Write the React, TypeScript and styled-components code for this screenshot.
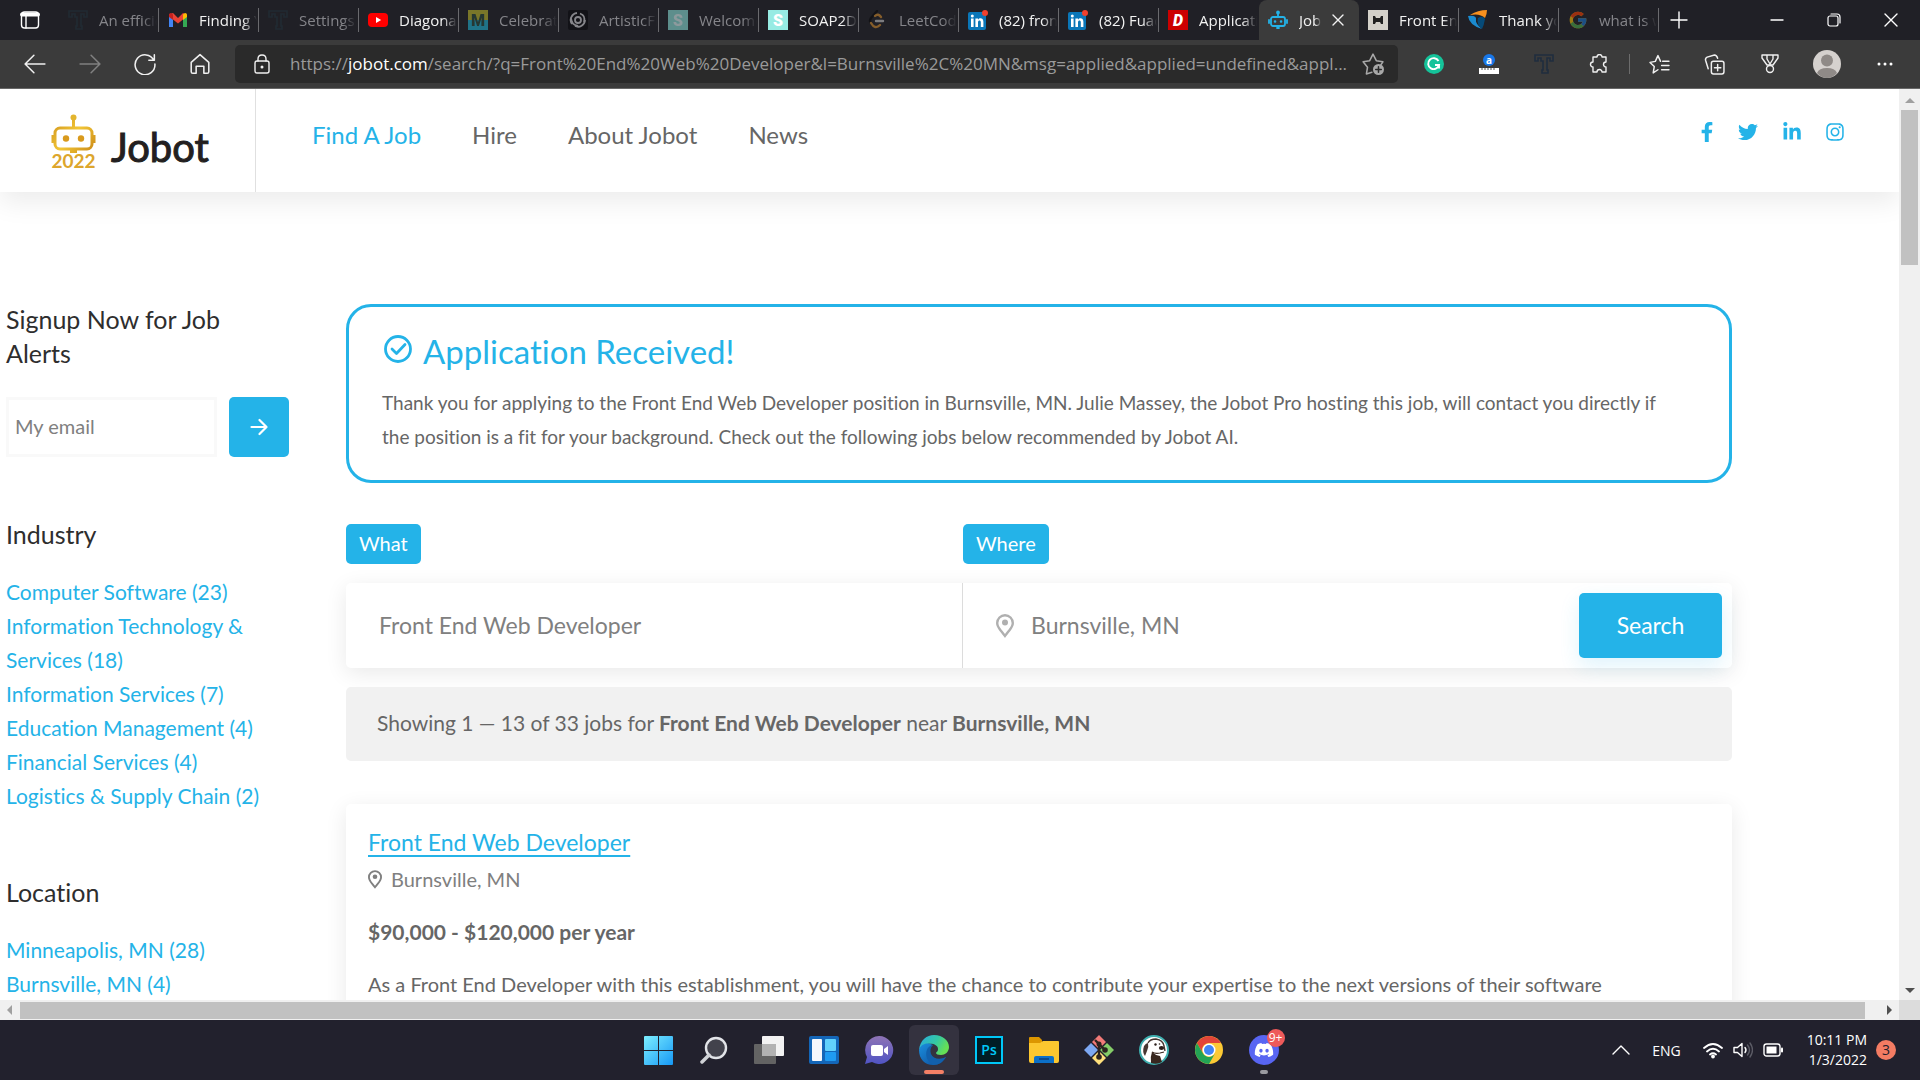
import React from 'react';
import styled, { createGlobalStyle, css } from 'styled-components';
import { FaFacebookF, FaTwitter, FaLinkedinIn, FaInstagram, FaDiscord } from 'react-icons/fa';
import { FcGoogle } from 'react-icons/fc';

const blue = '#24b3e8';
const brand = '"Lato", sans-serif';
const system = '"Open Sans", "Noto Sans", sans-serif';

const GlobalStyle = createGlobalStyle`
  *, *::before, *::after { box-sizing: border-box; }
  body { margin: 0; background: #fff; overflow: hidden; font-family: ${brand}; font-variant-ligatures: none; }
  button, input { font: inherit; }
  button { border: 0; padding: 0; background: none; color: inherit; }
  h1, h2, p, ul { margin: 0; padding: 0; }
  ul { list-style: none; }
  a { color: inherit; text-decoration: none; }
  svg { display: block; flex: none; }
`;

const Desktop = styled.div`
  height: 100vh;
  display: flex;
  flex-direction: column;
`;

/* ---------- browser chrome ---------- */

const TabStrip = styled.div`
  height: 40px;
  flex: none;
  display: flex;
  background: #202026;
  color: #fff;
  font-family: ${system};
`;

const StripButton = styled.button<{ $w: number }>`
  width: ${p => p.$w}px;
  height: 40px;
  display: grid;
  place-items: center;
  flex: none;
`;

const Tab = styled.button<{ $active?: boolean; $asleep?: boolean; $divider: boolean }>`
  flex: 0 1 100px;
  min-width: 0;
  height: 40px;
  padding: 0 ${p => (p.$active ? 15 : 2)}px 0 9px;
  display: flex;
  align-items: center;
  gap: 11px;
  font-size: 15px;
  text-align: left;
  color: ${p => (p.$asleep ? '#85858a' : '#f2f2f2')};
  ${p =>
    p.$divider &&
    css`
      background: linear-gradient(#6a6a6e, #6a6a6e) right center / 1px 24px no-repeat;
    `}
  ${p =>
    p.$active &&
    css`
      background: #3b3b3b;
      border-radius: 8px 8px 0 0;
    `}
  & > svg {
    opacity: ${p => (p.$asleep ? 0.55 : 1)};
  }
`;

const TabTitle = styled.span`
  flex: 1;
  overflow: hidden;
  white-space: nowrap;
  mask-image: linear-gradient(90deg, #000 75%, transparent);
`;

const WindowControls = styled.div`
  margin-left: auto;
  display: flex;
`;

const Toolbar = styled.div`
  height: 49px;
  flex: none;
  display: flex;
  align-items: center;
  padding: 0 8px 0 7px;
  background: #3b3b3b;
  border-bottom: 1px solid #686868;
  color: #f0f0f0;
  font-family: ${system};
`;

const ToolButton = styled.button<{ $dim?: boolean; $wide?: boolean }>`
  width: ${p => (p.$wide ? 60 : 55)}px;
  height: 40px;
  display: grid;
  place-items: center;
  flex: none;
  color: ${p => (p.$dim ? '#808080' : '#f0f0f0')};
`;

const AddressBar = styled.div`
  flex: 1;
  min-width: 0;
  height: 38px;
  margin: 0 8px;
  padding: 0 14px 0 17px;
  display: flex;
  align-items: center;
  border-radius: 5px;
  background: #2a2a2a;
`;

const Url = styled.span`
  flex: 1;
  min-width: 0;
  margin: 0 12px 0 18px;
  padding-bottom: 2px;
  overflow: hidden;
  white-space: nowrap;
  font-size: 17px;
  color: #9a9a9a;
  b { font-weight: 400; color: #fff; }
`;

const ToolDivider = styled.span`
  width: 1px;
  height: 20px;
  margin: 0 2px 0 3px;
  background: #6c6c6c;
`;

/* ---------- viewport and scroll bars ---------- */

const Viewport = styled.div`
  flex: 1;
  min-height: 0;
  display: grid;
  grid-template: minmax(0, 1fr) 20px / minmax(0, 1fr) 21px;
`;

const VBar = styled.div`
  display: flex;
  flex-direction: column;
  align-items: center;
  justify-content: space-between;
  background: #f0f0f0;
`;

const VThumb = styled.div`
  width: 17px;
  height: 17%;
  margin-bottom: auto;
  background: #c1c1c1;
`;

const HBar = styled.div`
  display: flex;
  align-items: center;
  background: #f0f0f0;
`;

const HThumb = styled.div`
  flex: 1;
  height: 17px;
  margin-right: 14px;
  background: #c1c1c1;
`;

const Corner = styled.div`
  background: #dcdcdc;
`;

const Arrow = styled.button`
  width: 20px;
  height: 21px;
  display: grid;
  place-items: center;
`;

const Page = styled.div`
  min-height: 0;
  overflow: hidden;
  background: #fff;
`;

/* ---------- site header ---------- */

const Header = styled.header`
  height: 103px;
  display: flex;
  background: #fff;
  box-shadow: 0 10px 25px rgba(0, 0, 0, 0.08);
`;

const Logo = styled.a`
  width: 256px;
  padding: 25px 0 0 51px;
  display: flex;
  gap: 15px;
  border-right: 1px solid #e0e0e0;
`;

const LogoMark = styled.span`
  display: flex;
  flex-direction: column;
  align-items: center;
  font-size: 19px;
  font-weight: 700;
  line-height: 14px;
  color: #dda62c;
`;

const LogoName = styled.span`
  font-size: 40px;
  line-height: 66px;
  color: #231f20;
  -webkit-text-stroke: 1px #231f20;
`;

const Nav = styled.nav`
  display: flex;
  align-items: center;
  gap: 51px;
  padding: 0 0 11px 56px;
`;

const NavLink = styled.a<{ $current?: boolean }>`
  font-size: 24px;
  line-height: 34px;
  color: ${p => (p.$current ? blue : '#666')};
`;

const Social = styled.div`
  margin-left: auto;
  padding: 33px 55px 0 0;
  display: flex;
  gap: 25px;
  color: ${blue};
`;

const SocialLink = styled.a<{ $w: number }>`
  width: ${p => p.$w}px;
  height: 20px;
  display: grid;
  justify-content: center;
`;

/* ---------- content ---------- */

const Content = styled.div`
  display: grid;
  grid-template-columns: 283px minmax(0, 1fr);
  gap: 57px;
  padding: 110px 167px 0 6px;
`;

const Sidebar = styled.aside`
  display: flex;
  flex-direction: column;
`;

const SideTitle = styled.h2`
  max-width: 240px;
  font-size: 25px;
  font-weight: 400;
  line-height: 34px;
  color: #2e2e2e;
`;

const Signup = styled.form`
  display: flex;
  gap: 12px;
  margin: 27px 0 60px;
`;

const EmailInput = styled.input`
  flex: 1;
  min-width: 0;
  height: 60px;
  padding: 0 6px 2px;
  border: 3px solid #f9f9f9;
  outline: 0;
  font-size: 20px;
  background: #fff;
  &::placeholder { color: #808080; opacity: 1; }
`;

const GoButton = styled.button`
  width: 60px;
  display: grid;
  place-items: center;
  border-radius: 5px;
  background: ${blue};
  color: #fff;
`;

const LinkList = styled.ul`
  max-width: 270px;
  margin: 24px 0 62px;
  font-size: 21px;
  line-height: 34px;
  color: ${blue};
`;

const Main = styled.main`
  display: flex;
  flex-direction: column;
  padding-top: 2px;
`;

const Notice = styled.section`
  padding: 24px 60px 26px 33px;
  border: 3px solid ${blue};
  border-radius: 25px;
`;

const NoticeTitle = styled.h1`
  display: flex;
  align-items: center;
  gap: 10px;
  padding-left: 1px;
  font-size: 33px;
  font-weight: 400;
  line-height: 40px;
  color: ${blue};
  svg { margin-bottom: 4px; }
`;

const NoticeText = styled.p`
  margin-top: 15px;
  font-size: 19px;
  line-height: 34px;
  color: #666;
`;

const SearchForm = styled.form`
  display: grid;
  grid-template-columns: 617px minmax(0, 1fr);
  row-gap: 19px;
  margin-top: 41px;
`;

const FieldLabel = styled.label`
  justify-self: start;
  padding: 0 13px 2px;
  border-radius: 5px;
  font-size: 20px;
  line-height: 38px;
  color: #fff;
  background: ${blue};
`;

const SearchPanel = styled.div`
  grid-column: 1 / -1;
  height: 85px;
  display: grid;
  grid-template-columns: subgrid;
  border-radius: 5px;
  box-shadow: 0 5px 22px rgba(0, 0, 0, 0.09);
`;

const Field = styled.div<{ $divided?: boolean }>`
  display: flex;
  align-items: center;
  gap: 17px;
  padding: 0 10px 0 33px;
  border-right: ${p => (p.$divided ? '1px solid #dcdcdc' : '0')};
  color: #b0b0b0;
`;

const FieldInput = styled.input`
  flex: 1;
  min-width: 0;
  padding: 0 0 2px;
  border: 0;
  outline: 0;
  background: none;
  font-size: 23px;
  color: #808080;
`;

const SearchButton = styled.button`
  width: 143px;
  height: 65px;
  padding-bottom: 2px;
  border-radius: 5px;
  background: ${blue};
  box-shadow: 0 8px 20px rgba(36, 179, 232, 0.14);
  font-size: 23px;
  color: #fff;
`;

const Summary = styled.p`
  margin-top: 19px;
  padding: 19px 31px 21px;
  border-radius: 5px;
  background: #f1f1f1;
  font-size: 21px;
  line-height: 34px;
  color: #666;
`;

const JobCard = styled.article`
  margin-top: 43px;
  padding: 21px 22px;
  border-radius: 5px;
  box-shadow: 0 5px 22px rgba(0, 0, 0, 0.09);
  font-size: 20px;
  line-height: 34px;
  color: #666;
`;

const JobTitle = styled.h2`
  font-size: 23px;
  font-weight: 400;
  line-height: 34px;
  color: ${blue};
  a {
    text-decoration: underline;
    text-decoration-thickness: 2px;
    text-underline-offset: 4px;
  }
`;

const JobPlace = styled.p`
  display: flex;
  align-items: center;
  gap: 9px;
  margin: 3px 0 19px;
  color: #808080;
`;

const Salary = styled.p`
  margin-bottom: 18px;
  font-size: 21px;
  font-weight: 700;
`;

/* ---------- taskbar ---------- */

const Taskbar = styled.footer`
  height: 60px;
  flex: none;
  display: grid;
  grid-template-columns: 1fr auto 1fr;
  align-items: center;
  background: #22212d;
  color: #fff;
  font-family: ${system};
`;

const Apps = styled.div`
  grid-column: 2;
  display: flex;
  gap: 5px;
  padding-left: 2px;
`;

const AppButton = styled.button<{ $active?: boolean }>`
  position: relative;
  width: 50px;
  height: 50px;
  display: grid;
  place-items: center;
  border-radius: 6px;
  background: ${p => (p.$active ? '#34323f' : 'transparent')};
`;

const RunMark = styled.span<{ $wide?: boolean }>`
  position: absolute;
  bottom: 1px;
  width: ${p => (p.$wide ? 20 : 8)}px;
  height: 4px;
  border-radius: 2px;
  background: ${p => (p.$wide ? '#f48066' : '#9a9aa0')};
`;

const AppBadge = styled.span`
  position: absolute;
  top: 4px;
  right: 4px;
  width: 18px;
  height: 18px;
  border-radius: 50%;
  background: #ee5a5a;
  font-size: 12px;
  line-height: 18px;
`;

const Tray = styled.div`
  justify-self: end;
  display: flex;
  align-items: center;
  padding-right: 24px;
  font-size: 14px;
`;

const TrayItem = styled.button`
  display: flex;
  align-items: center;
  gap: 10px;
  margin-right: 22px;
`;

const Clock = styled.time`
  margin: 0 9px 0 2px;
  text-align: right;
  line-height: 20px;
`;

const Alerts = styled.span`
  width: 20px;
  height: 20px;
  border-radius: 50%;
  background: #f47c63;
  color: #22212d;
  text-align: center;
  line-height: 20px;
`;

/* ---------- drawings ---------- */

type DrawProps = { size?: number; box?: number; children: React.ReactNode; sw?: number };

const Line = ({ size = 20, box = 20, sw = 1.4, children }: DrawProps) => (
  <svg width={size} height={size} viewBox={`0 0 ${box} ${box}`} fill="none" stroke="currentColor" strokeWidth={sw} strokeLinecap="round" strokeLinejoin="round" aria-hidden="true">
    {children}
  </svg>
);

const Fill = ({ size = 20, box = 20, children }: DrawProps) => (
  <svg width={size} height={size} viewBox={`0 0 ${box} ${box}`} aria-hidden="true">{children}</svg>
);

const Pin = ({ size }: { size: number }) => (
  <svg width={Math.round(size * 0.75)} height={size} viewBox="0 0 18 24" fill="currentColor" aria-hidden="true">
    <path fillRule="evenodd" d="M9 0a9 9 0 0 0-9 9c0 5 6 10.500 9 15 3-4.500 9-10 9-15a9 9 0 0 0-9-9Zm0 2.400A6.600 6.600 0 0 1 15.600 9c0 3.500-3.600 7-6.600 11C6 16 2.400 12.500 2.400 9A6.600 6.600 0 0 1 9 2.400Z" />
    <circle cx="9" cy="8.500" r="3" />
  </svg>
);

const Typer = ({ size = 20, color = '#22333d' }) => (
  <Fill size={size}>
    <path d="M1 1h18v6h-3V4h-3v12h1v3H8v-3h1V7H7V4H4v3H1Z" fill="none" stroke={color} strokeWidth="1.600" />
  </Fill>
);

const Gmail = () => (
  <Fill>
    <path d="M1 4.500v12.500h4V9.500l5 4 5-4V17h4V4.500L15 3l-5 5-5-5Z" fill="#ea4335" />
    <path d="M1 6v11h4V8Z" fill="#4285f4" />
    <path d="M15 8v9h4V6Z" fill="#34a853" />
    <path d="M15 4.500 17 3q2 0 2 2v2l-4 3Z" fill="#fbbc04" />
    <path d="M1 7V5q0-2 2-2l2 1.500V10Z" fill="#c5221f" />
  </Fill>
);

const Letter = ({ bg, fg, ch, bottom, slant }: { bg: string; fg: string; ch: string; bottom?: string; slant?: boolean }) => (
  <Fill>
    <rect width="20" height="20" fill={bg} />
    {bottom && <rect y="10" width="20" height="10" fill={bottom} />}
    <text x="10" y="16" textAnchor="middle" fontFamily="Roboto" fontStyle={slant ? 'italic' : 'normal'} fontWeight="900" fontSize="16" fill={fg}>{ch}</text>
  </Fill>
);

const YouTube = () => (
  <Fill>
    <rect y="3" width="20" height="14" rx="4" fill="#f00" />
    <path d="m8 7 5.200 3L8 13Z" fill="#fff" />
  </Fill>
);

const Swirl = () => (
  <Fill>
    <rect width="20" height="20" rx="2" fill="#08080c" />
    <g fill="none" stroke="#d8d8dc" strokeWidth="1.800">
      <circle cx="10" cy="10" r="3" />
      <path d="M4 14A7 7 0 0 1 9 3M7 16a7 7 0 0 0 10-6M12 3.500q6 2 4 9M3 7q0 8 7 9" />
    </g>
  </Fill>
);

const Leet = () => (
  <Line sw={2.4}>
    <path d="M9 1 3 8q-2 3 0 5" stroke="#08080a" />
    <path d="M3 13q4 7 9 2M7 6q3-3 6 1" stroke="#d9902f" />
    <path d="M8 11h7" stroke="#c8c8c8" />
  </Line>
);

const LinkedIn = () => (
  <Fill>
    <rect y="2" width="18" height="18" rx="2" fill="#0a76b8" />
    <path d="M3 8.500h2.600V17H3ZM7.400 8.500H10v1.200c1.600-2.400 5.400-1.800 5.400 2V17h-2.600v-4.700c0-2.400-2.800-2.100-2.800 0V17H7.400Z" fill="#fff" />
    <circle cx="4.300" cy="6" r="1.500" fill="#fff" />
    <circle cx="17" cy="3" r="3" fill="#f0402c" />
  </Fill>
);

const RobotTab = () => (
  <Line sw={1.8}>
    <g stroke={blue}>
      <rect x="3" y="7" width="14" height="9" rx="2" />
      <path d="M10 7V3.500M1 10v3M19 10v3M9 18h2" />
      <circle cx="10" cy="2.500" r="1" />
      <path d="M7 11.500h.1M13 11.500h.1" strokeWidth="2.500" />
    </g>
  </Line>
);

const Film = () => (
  <Fill>
    <rect width="20" height="20" fill="#d4d1ca" />
    <path d="M5 6h2l1 2h4l1-2h2v8h-2l-1-2H8l-1 2H5Z" fill="#222" />
  </Fill>
);

const Swoosh = () => (
  <Fill>
    <path d="M2 5Q10 0 19 0q0 4-2 8Q12 3 2 5Z" fill="#f7901e" />
    <path d="M0 6q9-1 8 4-1 3 6 9Q1 15 0 6Z" fill="#1b8bd0" />
    <path d="M10 8q5-3 7 1-1 6-3 10-6-5-4-11Z" fill="#064a78" />
  </Fill>
);

const dim = '#5c5c66';
const tabs: { title: string; icon: React.ReactNode; asleep?: boolean; active?: boolean }[] = [
  { title: 'An efficient', icon: <Typer />, asleep: true },
  { title: 'Finding Y', icon: <Gmail /> },
  { title: 'Settings', icon: <Typer />, asleep: true },
  { title: 'Diagonal', icon: <YouTube /> },
  { title: 'Celebrate', icon: <Letter bg="#c4bd2c" bottom="#20b8d8" fg="#2b4a3c" ch="M" />, asleep: true },
  { title: 'ArtisticFl', icon: <Swirl />, asleep: true },
  { title: 'Welcome', icon: <Letter bg="#8fe8e0" fg="#e6ffff" ch="S" />, asleep: true },
  { title: 'SOAP2DAY', icon: <Letter bg="#97ebe3" fg="#fff" ch="S" /> },
  { title: 'LeetCode', icon: <Leet />, asleep: true },
  { title: '(82) front', icon: <LinkedIn /> },
  { title: '(82) Fuad', icon: <LinkedIn /> },
  { title: 'Applicati', icon: <Letter bg="#cc0000" fg="#fff" ch="D" slant /> },
  { title: 'Jobot', icon: <RobotTab />, active: true },
  { title: 'Front End', icon: <Film /> },
  { title: 'Thank you', icon: <Swoosh /> },
  { title: 'what is w', icon: <FcGoogle size={20} />, asleep: true },
];

const RobotLogo = () => (
  <svg width="45" height="40" viewBox="0 0 45 40" fill="none" stroke="url(#gold)" strokeWidth="3" aria-hidden="true">
    <defs>
      <linearGradient id="gold" x1="0" y1="0" x2="45" y2="40" gradientUnits="userSpaceOnUse">
        <stop stopColor="#c98a17" /><stop offset=".5" stopColor="#f2c637" /><stop offset="1" stopColor="#c78312" />
      </linearGradient>
    </defs>
    <rect x="4" y="14" width="37" height="21" rx="5" />
    <path d="M22.500 13V4M2 21v8M43 21v8M19 37.500h7" />
    <circle cx="22.500" cy="3.500" r="3" fill="#e3b52e" stroke="none" />
    <circle cx="15" cy="24.500" r="3.200" fill="#d99a1d" stroke="none" />
    <circle cx="30" cy="24.500" r="3.200" fill="#d99a1d" stroke="none" />
  </svg>
);

const Medal = () => (
  <Line>
    <path d="M2 1h16v3l-5 7H7L2 4ZM7 1v4l3 5 3-5V1" /><circle cx="10" cy="15" r="3.500" />
  </Line>
);

const apps: { name: string; icon: React.ReactNode }[] = [
  {
    name: 'Start',
    icon: (
      <Fill size={29} box={29}>
        <defs><linearGradient id="win" x1="0" y1="0" x2="1" y2="1"><stop stopColor="#7defff" /><stop offset="1" stopColor="#1698f5" /></linearGradient></defs>
        <path d="M0 1q0-1 1-1h13v14H0ZM15 0h13q1 0 1 1v13H15ZM0 15h14v14H1q-1 0-1-1ZM15 15h14v13q0 1-1 1H15Z" fill="url(#win)" />
      </Fill>
    ),
  },
  { name: 'Search', icon: <Line size={28} box={28} sw={2.4}><circle cx="16" cy="12" r="10" fill="#42424c" stroke="#e2e4e8" /><path d="m9 19-7 7" stroke="#d0d2d6" strokeWidth="3.500" /></Line> },
  {
    name: 'Task view',
    icon: <Fill size={30} box={30}><rect y="9" width="22" height="20" rx="1" fill="#636363" /><rect x="8" y="1" width="22" height="20" rx="1" fill="#f2f2f2" /><path d="M8 9h14v12H8Z" fill="#b2b2b2" /></Fill>,
  },
  {
    name: 'Widgets',
    icon: <Fill size={30} box={30}><rect y="1" width="30" height="28" rx="2" fill="#1466b8" /><rect x="3" y="4" width="10" height="22" rx="1" fill="#f5f8fc" /><rect x="16" y="4" width="11" height="12" rx="1" fill="#62d2fc" /><rect x="16" y="17" width="11" height="9" rx="1" fill="#1f9bf2" /></Fill>,
  },
  {
    name: 'Chat',
    icon: (
      <Fill size={30} box={30}>
        <defs><linearGradient id="chat" x1="0" y1="0" x2="0" y2="1"><stop stopColor="#8f74b5" /><stop offset="1" stopColor="#5054c4" /></linearGradient></defs>
        <path d="M15 1a14 14 0 1 1-7 26l-7 2 2-7A14 14 0 0 1 15 1Z" fill="url(#chat)" />
        <rect x="7" y="10" width="12" height="11" rx="2" fill="#fff" /><path d="m20 14 4-3v9l-4-3Z" fill="#fff" />
      </Fill>
    ),
  },
  {
    name: 'Edge',
    icon: (
      <Fill size={30} box={30}>
        <defs>
          <linearGradient id="edgeTop" x1="0" y1="0" x2="1" y2=".4"><stop stopColor="#29a9e4" /><stop offset=".6" stopColor="#34c8a4" /><stop offset="1" stopColor="#66e055" /></linearGradient>
          <linearGradient id="edgeLow" x1="0" y1="0" x2="1" y2="1"><stop stopColor="#1b8fde" /><stop offset="1" stopColor="#0c4a98" /></linearGradient>
        </defs>
        <path d="M0 15C1 5 8 0 15 0c9 0 15 6 15 12 0 5-4 8-8 8-3 0-5-1-5-2 0-1 2-1 2-4C19 8 6 6 0 15Z" fill="url(#edgeTop)" />
        <path d="M0 15C2 8 9 7 14 10c-4 1-5 5-3 9 3 6 10 7 16 3-3 5-7 8-13 8C6 30 0 24 0 15Z" fill="url(#edgeLow)" />
        <path d="M14 10c-8 1-10 14 0 20 6 0 10-3 13-8-6 3-13 2-15-3-1-3-1-6 2-9Z" fill="#1260ac" />
      </Fill>
    ),
  },
  {
    name: 'Photoshop',
    icon: <Fill size={28} box={28}><rect x="1" y="1" width="26" height="26" fill="#001d26" stroke="#00c8f8" strokeWidth="2" /><text x="14" y="19" textAnchor="middle" fontFamily="Open Sans" fontWeight="600" fontSize="14" fill="#00c8f8">Ps</text></Fill>,
  },
  {
    name: 'File Explorer',
    icon: <Fill size={30} box={30}><path d="M0 3q0-1 1-1h9l3 3v5H0Z" fill="#dc9600" /><path d="M0 8h11l3-2h15q1 0 1 1v19q0 2-2 2H2q-2 0-2-2Z" fill="#fcc72f" /><path d="M5 28v-5q0-2 2-2h16q2 0 2 2v5Z" fill="#0c70c8" /><path d="M10 24h10" stroke="#0a4a8e" strokeWidth="2" /></Fill>,
  },
  {
    name: 'Git',
    icon: (
      <Fill size={30} box={30}>
        <path d="m15 0 7 7-7 7-7-7Z" fill="#f27a78" /><path d="m7 8 7 7-7 7-7-7Z" fill="#7da8f2" /><path d="m23 8 7 7-7 7-7-7Z" fill="#84cc68" /><path d="m15 16 7 7-7 7-7-7Z" fill="#ffe07c" />
        <path d="M11 5l4 4v14M15 9l6 6" stroke="#2c2320" strokeWidth="2.400" fill="none" /><g fill="#2c2320"><circle cx="15" cy="9" r="2.500" /><circle cx="15" cy="22" r="2.800" /><circle cx="21" cy="15" r="2.800" /></g>
      </Fill>
    ),
  },
  {
    name: 'Database tool',
    icon: (
      <Fill size={30} box={30}>
        <circle cx="15" cy="15" r="14" fill="#fff" stroke="#3fb0b0" strokeWidth="2" />
        <path d="M9 8q2-4 8-4 7 1 8 7l1 5" fill="none" stroke="#463631" strokeWidth="1.400" />
        <path d="M5 11q2-3 4-3 1 4-1 8l-2 5q-3-4-1-10Z" fill="#463631" />
        <path d="M12 28q-1-6 1-11 3 3 8 4l2 6q-5 3-11 1Z" fill="#38271f" />
        <path d="M13 17q3 2 8 1l4-1" fill="none" stroke="#38271f" strokeWidth="1.200" />
        <ellipse cx="22.500" cy="13" rx="2.600" ry="2" fill="#2b1f1b" />
        <circle cx="16.500" cy="9.500" r="1.200" fill="#2b1f1b" />
        <circle cx="20.500" cy="9" r=".8" fill="#2b1f1b" />
      </Fill>
    ),
  },
  {
    name: 'Chrome',
    icon: <Fill size={28} box={28}><circle cx="14" cy="14" r="14" fill="#fcc934" /><path d="M1.900 7A14 14 0 0 1 26.100 7H14a7 7 0 0 0-6 10.500Z" fill="#e24538" /><path d="M1.900 7A14 14 0 0 0 14 28l6-10.500A7 7 0 0 1 8 17.500Z" fill="#23a455" /><circle cx="14" cy="14" r="6.500" fill="#fff" /><circle cx="14" cy="14" r="5" fill="#4285f4" /></Fill>,
  },
  {
    name: 'Discord',
    icon: <Fill size={30} box={30}><circle cx="15" cy="15" r="15" fill="#5865f2" /><g color="#fff"><FaDiscord x="5" y="5" size={20} /></g></Fill>,
  },
];

const industries = ['Computer Software (23)', 'Information Technology & Services (18)', 'Information Services (7)', 'Education Management (4)', 'Financial Services (4)', 'Logistics & Supply Chain (2)'];
const locations = ['Minneapolis, MN (28)', 'Burnsville, MN (4)'];

const Links = ({ items }: { items: string[] }) => (
  <LinkList>{items.map(t => <li key={t}><a href="#">{t}</a></li>)}</LinkList>
);

const Browser = () => (
  <>
    <TabStrip>
      <StripButton $w={59} aria-label="Tab actions">
        <Line><rect x="1.500" y="2" width="17" height="16" rx="3" /><path d="M2 4.500h16" strokeWidth="4" /><path d="M6 6v12" /></Line>
      </StripButton>
      {tabs.map((t, i) => (
        <Tab key={t.title} $active={t.active} $asleep={t.asleep} $divider={!t.active && i !== 11}>
          {t.icon}
          <TabTitle>{t.title}</TabTitle>
          {t.active && <Line size={12} box={12}><path d="m1 1 10 10M11 1 1 11" /></Line>}
        </Tab>
      ))}
      <StripButton $w={40} aria-label="New tab"><Line size={18} box={18}><path d="M9 1v16M1 9h16" /></Line></StripButton>
      <WindowControls>
        <StripButton $w={57} aria-label="Minimize"><Line size={14} box={14}><path d="M1 7h12" /></Line></StripButton>
        <StripButton $w={57} aria-label="Restore"><Line size={14} box={14} sw={1.2}><rect x="1" y="3" width="10" height="10" rx="2" /><path d="M4 1h6q3 0 3 3v6" /></Line></StripButton>
        <StripButton $w={58} aria-label="Close"><Line size={14} box={14}><path d="m1 1 12 12M13 1 1 13" /></Line></StripButton>
      </WindowControls>
    </TabStrip>
    <Toolbar>
      <ToolButton aria-label="Back"><Line size={22}><path d="M19 10H1.500M9 2l-8 8 8 8" /></Line></ToolButton>
      <ToolButton $dim aria-label="Forward"><Line size={22}><path d="M1 10h17.500M11 2l8 8-8 8" /></Line></ToolButton>
      <ToolButton aria-label="Refresh"><Line size={22}><path d="M18 6.500A9 9 0 1 0 19 10M18.500 1.500v5h-5" /></Line></ToolButton>
      <ToolButton aria-label="Home"><Line size={22}><path d="M2 8.500 10 1.500l8 7V17q0 1.500-1.500 1.500h-3V12h-7v6.500h-3Q2 18.500 2 17Z" /></Line></ToolButton>
      <AddressBar>
        <Line size={20}><rect x="3" y="7" width="14" height="12" rx="2" /><path d="M6 7V5q0-4 4-4t4 4v2" /><circle cx="10" cy="13" r=".8" fill="currentColor" /></Line>
        <Url>https://<b>jobot.com</b>/search/?q=Front%20End%20Web%20Developer&amp;l=Burnsville%2C%20MN&amp;msg=applied&amp;applied=undefined&amp;appl...</Url>
        <Line size={22}><g stroke="#a8a8a8"><path d="M9 17.500 4 19l1-6-4-5 6-1 3-6 3 6 6 1-2 3" /></g><circle cx="15" cy="15" r="5" fill="#a8a8a8" stroke="none" /><path d="M15 12.500v5M12.500 15h5" stroke="#2a2a2a" /></Line>
      </AddressBar>
      <ToolButton aria-label="Grammar extension"><Fill size={20}><circle cx="10" cy="10" r="10" fill="#15c39a" /><path d="M14.500 7A5.500 5.500 0 1 0 15 11h-4M15 11v3.500" stroke="#fff" strokeWidth="1.900" fill="none" /></Fill></ToolButton>
      <ToolButton aria-label="Ruler extension"><Fill size={20}><circle cx="10" cy="6" r="6" fill="#1877e8" /><text x="10" y="9.500" textAnchor="middle" fontFamily="Open Sans" fontWeight="700" fontSize="10" fill="#fff">a</text><path d="M0 14h20v6H0Z" fill="#fff" /><path d="M3 14v2M6 14v2M9 14v2M12 14v2M15 14v2" stroke="#555" /></Fill></ToolButton>
      <ToolButton aria-label="Typing extension"><Typer color="#202e3f" /></ToolButton>
      <ToolButton aria-label="Extensions"><Line size={20}><path d="M4 3h4a2.500 2.500 0 0 1 5 0h4v5a2.300 2.300 0 0 0 0 5v5h-4a2.500 2.500 0 0 0-5 0H4v-5a2.500 2.500 0 0 1 0-5Z" /></Line></ToolButton>
      <ToolDivider />
      <ToolButton aria-label="Favorites"><Line size={21}><path d="M11 7 8.500 1.500 6 7l-5 1 4 4-1 6 4.500-3M13 7h6M12 11h7M12 15h7" /></Line></ToolButton>
      <ToolButton aria-label="Collections"><Line size={21}><rect x="7" y="7" width="12" height="12" rx="2" /><path d="M13 10v6M10 13h6M4 14 1.500 6Q1 4 3 3l7-2q2 0 3 3" /></Line></ToolButton>
      <ToolButton aria-label="Rewards"><Medal /></ToolButton>
      <ToolButton $wide aria-label="Profile"><Fill size={28} box={28}><circle cx="14" cy="14" r="14" fill="#d5d1ce" /><circle cx="14" cy="10.500" r="6" fill="#8f8a87" /><path d="M4 23q2-5 10-5t10 5q-4 5-10 5T4 23Z" fill="#8f8a87" /></Fill></ToolButton>
      <ToolButton aria-label="Menu"><Fill size={18} box={18}><g fill="#fff"><circle cx="3" cy="9" r="1.500" /><circle cx="9" cy="9" r="1.500" /><circle cx="15" cy="9" r="1.500" /></g></Fill></ToolButton>
    </Toolbar>
  </>
);

const Triangle = ({ d, color = '#505050' }: { d: string; color?: string }) => (
  <Arrow tabIndex={-1} aria-hidden="true"><Fill size={10} box={10}><path d={d} fill={color} /></Fill></Arrow>
);

export default function App() {
  return (
    <Desktop>
      <GlobalStyle />
      <Browser />
      <Viewport>
        <Page>
          <Header>
            <Logo href="#">
              <LogoMark><RobotLogo />2022</LogoMark>
              <LogoName>Jobot</LogoName>
            </Logo>
            <Nav>
              <NavLink href="#" $current>Find A Job</NavLink>
              <NavLink href="#">Hire</NavLink>
              <NavLink href="#">About Jobot</NavLink>
              <NavLink href="#">News</NavLink>
            </Nav>
            <Social>
              <SocialLink $w={13} href="#" aria-label="Facebook"><FaFacebookF size={20} /></SocialLink>
              <SocialLink $w={20} href="#" aria-label="Twitter"><FaTwitter size={20} /></SocialLink>
              <SocialLink $w={18} href="#" aria-label="LinkedIn"><FaLinkedinIn size={20} /></SocialLink>
              <SocialLink $w={18} href="#" aria-label="Instagram"><FaInstagram size={20} /></SocialLink>
            </Social>
          </Header>
          <Content>
            <Sidebar>
              <SideTitle>Signup Now for Job Alerts</SideTitle>
              <Signup>
                <EmailInput type="email" placeholder="My email" aria-label="My email" />
                <GoButton type="button" aria-label="Sign up"><Line size={18} box={18} sw={2.2}><path d="M1.500 9h15M9.500 2l7 7-7 7" /></Line></GoButton>
              </Signup>
              <SideTitle>Industry</SideTitle>
              <Links items={industries} />
              <SideTitle>Location</SideTitle>
              <Links items={locations} />
            </Sidebar>
            <Main>
              <Notice>
                <NoticeTitle>
                  <Line size={30} box={30} sw={2.8}><circle cx="15" cy="15" r="12.500" /><path d="m9 15 4.500 4.500L22 10.500" /></Line>
                  Application Received!
                </NoticeTitle>
                <NoticeText>
                  Thank you for applying to the Front End Web Developer position in Burnsville, MN. Julie Massey, the Jobot Pro hosting this job, will contact you directly if the position is a fit for your background. Check out the following jobs below recommended by Jobot AI.
                </NoticeText>
              </Notice>
              <SearchForm>
                <FieldLabel htmlFor="what">What</FieldLabel>
                <FieldLabel htmlFor="where">Where</FieldLabel>
                <SearchPanel>
                  <Field $divided><FieldInput id="what" defaultValue="Front End Web Developer" /></Field>
                  <Field>
                    <Pin size={24} />
                    <FieldInput id="where" defaultValue="Burnsville, MN" />
                    <SearchButton type="button">Search</SearchButton>
                  </Field>
                </SearchPanel>
              </SearchForm>
              <Summary>Showing 1 — 13 of 33 jobs for <b>Front End Web Developer</b> near <b>Burnsville, MN</b></Summary>
              <JobCard>
                <JobTitle><a href="#">Front End Web Developer</a></JobTitle>
                <JobPlace><Pin size={19} />Burnsville, MN</JobPlace>
                <Salary>$90,000 - $120,000 per year</Salary>
                <p>As a Front End Developer with this establishment, you will have the chance to contribute your expertise to the next versions of their software</p>
              </JobCard>
            </Main>
          </Content>
        </Page>
        <VBar>
          <Triangle d="M0 8l5-5 5 5Z" color="#a0a0a0" />
          <VThumb />
          <Triangle d="M0 3l5 5 5-5Z" />
        </VBar>
        <HBar>
          <Triangle d="M7 0 2 5l5 5Z" color="#a0a0a0" />
          <HThumb />
          <Triangle d="m3 0 5 5-5 5Z" />
        </HBar>
        <Corner />
      </Viewport>
      <Taskbar>
        <Apps>
          {apps.map(a => (
            <AppButton key={a.name} $active={a.name === 'Edge'} aria-label={a.name}>
              {a.icon}
              {a.name === 'Edge' && <RunMark $wide />}
              {a.name === 'Discord' && <><RunMark /><AppBadge>9+</AppBadge></>}
            </AppButton>
          ))}
        </Apps>
        <Tray>
          <TrayItem aria-label="Hidden icons"><Line size={18} box={18}><path d="m1 13 8-8 8 8" /></Line></TrayItem>
          <TrayItem>ENG</TrayItem>
          <TrayItem aria-label="Network, volume and battery">
            <Line size={20}><path d="M1 8q9-8 18 0M4 11.500q6-5.500 12 0M7 14.500q3-2.500 6 0" strokeWidth="1.800" /><circle cx="10" cy="16.500" r="1.200" fill="currentColor" /></Line>
            <Line size={20}><path d="M1 7.500h3.500L9 3.500v13l-4.500-4H1ZM12 7.500q2 2.500 0 5" /><path d="M14.500 5q4 5 0 10M17 3q5 7 0 14" stroke={dim} /></Line>
            <Line size={20}><rect x="1" y="4" width="16" height="12" rx="2.500" /><rect x="3.500" y="6.500" width="10" height="7" fill="currentColor" stroke="none" /><path d="M19 8.500v3" strokeWidth="2" /></Line>
          </TrayItem>
          <Clock>10:11 PM<br />1/3/2022</Clock>
          <Alerts>3</Alerts>
        </Tray>
      </Taskbar>
    </Desktop>
  );
}
